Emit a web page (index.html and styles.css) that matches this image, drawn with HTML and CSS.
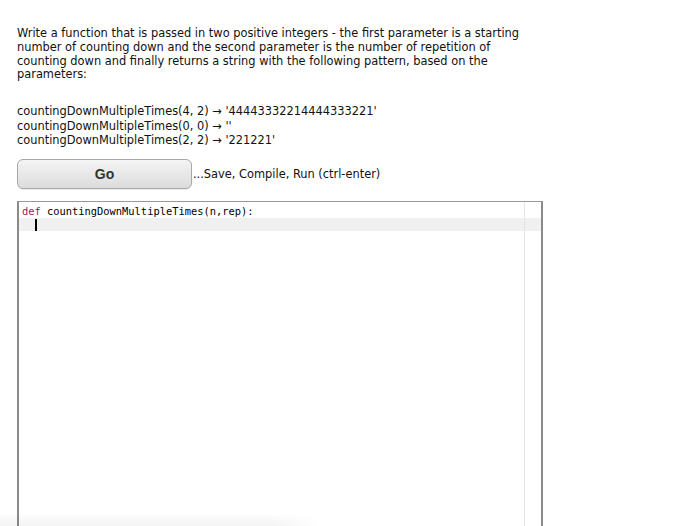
FILE: index.html
```html
<!DOCTYPE html>
<html>
<head>
<meta charset="utf-8">
<link rel="stylesheet" href="styles.css">
</head>
<body>
<div class="page">
  <p class="desc">Write a function that is passed in two positive integers - the first parameter is a starting number of counting down and the second parameter is the number of repetition of counting down and finally returns a string with the following pattern, based on the parameters:</p>
  <div class="examples">
    <div>countingDownMultipleTimes(4, 2) → '44443332214444333221'</div>
    <div>countingDownMultipleTimes(0, 0) → ''</div>
    <div>countingDownMultipleTimes(2, 2) → '221221'</div>
  </div>
  <div class="run">
    <button class="go">Go</button>
    <span class="hint">...Save, Compile, Run (ctrl-enter)</span>
  </div>
  <div class="editor">
    <div class="margin-line"></div>
    <div class="line"><span class="kw">def</span> countingDownMultipleTimes(n,rep):</div>
    <div class="line active"><span class="indent">  </span><span class="cursor"></span></div>
  </div>
</div>
<div class="scrollshade"></div>
</body>
</html>
```
FILE: styles.css
```css
html, body {
  margin: 0;
  padding: 0;
  background: #fff;
  overflow: hidden;
  height: 526px;
}
.page {
  padding: 27px 0 0 17px;
}
.desc {
  margin: 0;
  width: 520px;
  font-family: "DejaVu Sans", Verdana, sans-serif;
  font-size: 11.4px;
  line-height: 13.8px;
  color: #111;
}
.examples {
  margin-top: 22px;
  font-family: "DejaVu Sans", "Lucida Grande", sans-serif;
  font-size: 11.4px;
  line-height: 14.5px;
  color: #111;
}
.run {
  display: flex;
  align-items: center;
  margin-top: 11px;
}
.go {
  width: 175px;
  height: 30px;
  border: 1px solid #a8a8a8;
  border-radius: 6px;
  background: linear-gradient(#f4f4f4, #dcdcdc);
  font-family: "Liberation Sans", Arial, sans-serif;
  font-weight: bold;
  font-size: 14px;
  color: #333;
  padding: 0;
  box-shadow: 0 1px 1px rgba(0,0,0,0.08);
}
.hint {
  margin-left: 1px;
  font-family: "DejaVu Sans", "Lucida Grande", sans-serif;
  font-size: 11.4px;
  color: #111;
}
.editor {
  position: relative;
  margin-top: 12px;
  width: 522px;
  height: 340px;
  border: 1px solid #8a8a8a;
  border-right-width: 2px;
  border-left-width: 2px;
  border-top-color: #999;
  padding-top: 3px;
  font-family: "DejaVu Sans Mono", Monaco, monospace;
  font-size: 10.4px;
}
.margin-line {
  position: absolute;
  left: 505px;
  top: 0;
  bottom: 0;
  width: 1px;
  background: #e4e4e4;
}
.line {
  height: 13px;
  line-height: 13px;
  padding-left: 3px;
  color: #000;
  white-space: pre;
}
.kw {
  color: #931a68;
}
.line.active {
  background: rgba(0,0,0,0.06);
}
.cursor {
  display: inline-block;
  width: 2px;
  height: 12px;
  background: #000;
  vertical-align: top;
  margin-top: 1px;
}
.scrollshade {
  position: absolute;
  left: 0;
  top: 514px;
  width: 320px;
  height: 12px;
  background: linear-gradient(to bottom, rgba(0,0,0,0), rgba(0,0,0,0.05));
  -webkit-mask-image: linear-gradient(to right, #000 85%, transparent);
}
```
